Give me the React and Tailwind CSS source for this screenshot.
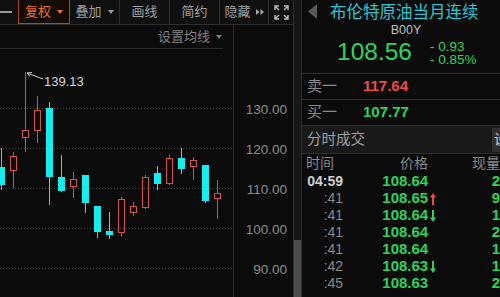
import React from "react";

// [type, bodyTop, bodyBottom, wickTop, wickBottom] in page y coordinates
const candles = [
  ["c", 167, 185, 148, 190],
  ["r", 156, 171, 152, 188],
  ["r", 130, 138, 72, 152],
  ["r", 110, 131, 96, 143],
  ["c", 108, 177, 102, 205],
  ["c", 177, 191, 155, 192],
  ["r", 179, 187, 172, 198],
  ["c", 175, 203, 175, 213],
  ["c", 206, 232, 206, 238],
  ["c", 231, 235, 212, 239],
  ["r", 199, 233, 197, 237],
  ["r", 206, 213, 202, 216],
  ["r", 177, 208, 175, 209],
  ["c", 173, 184, 166, 190],
  ["r", 158, 184, 155, 185],
  ["c", 158, 169, 148, 174],
  ["r", 160, 167, 157, 180],
  ["c", 165, 201, 165, 203],
  ["r", 193, 199, 180, 219],
];

const gridLines = [108, 148, 188, 228, 268];
const axisLabels = ["130.00", "120.00", "110.00", "100.00", "90.00"];

const trades = [
  { t: "04:59", p: "108.64", dir: null, q: "2", first: true },
  { t: ":41", p: "108.65", dir: "up", q: "9" },
  { t: ":41", p: "108.64", dir: "down", q: "1" },
  { t: ":41", p: "108.64", dir: null, q: "2" },
  { t: ":41", p: "108.64", dir: null, q: "1" },
  { t: ":42", p: "108.63", dir: "down", q: "1" },
  { t: ":45", p: "108.63", dir: null, q: "2" },
];

const Caret = ({ color = "#9a9a9a" }) => (
  <svg width="6" height="4" viewBox="0 0 6 4">
    <path d="M0 0H6L3 4Z" fill={color} />
  </svg>
);

const Arrow = ({ dir }) =>
  dir === "up" ? (
    <svg width="6" height="12" viewBox="0 0 6 12">
      <path d="M3 0L6 4.5H4V12H2V4.5H0Z" fill="#ef4b4b" />
    </svg>
  ) : (
    <svg width="6" height="12" viewBox="0 0 6 12">
      <path d="M3 12L6 7.5H4V0H2V7.5H0Z" fill="#2fd35b" />
    </svg>
  );

const CandleChart = () => (
  <svg width="233" height="248" viewBox="0 49 233 248" shapeRendering="crispEdges">
    {gridLines.map((y) => (
      <line key={y} x1="0" x2="233" y1={y + 0.5} y2={y + 0.5} stroke="#444" strokeDasharray="1 2" />
    ))}
    {candles.map(([type, bt, bb, wt, wb], i) => {
      const left = 12 * i - 2;
      if (type === "c") {
        return (
          <g key={i} fill="#14eeee">
            <rect x={left + 3} y={wt} width="1" height={wb - wt} />
            <rect x={left} y={bt} width="7" height={bb - bt} />
          </g>
        );
      }
      return (
        <g key={i}>
          <rect x={left + 3} y={wt} width="1" height={bt - wt} fill="#d2524c" />
          <rect x={left + 3} y={bb} width="1" height={wb - bb} fill="#d2524c" />
          <rect x={left + 0.5} y={bt + 0.5} width="6" height={bb - bt - 1} fill="none" stroke="#d2524c" />
        </g>
      );
    })}
    <g shapeRendering="geometricPrecision" stroke="#d0d0d0" strokeWidth="1" fill="none">
      <line x1="27" y1="73" x2="43" y2="79" />
      <polyline points="32,72.5 27,73 30,76.5" />
    </g>
    <text x="44" y="85.5" fill="#d8d8d8" fontSize="13" fontFamily="Liberation Sans, sans-serif">
      139.13
    </text>
  </svg>
);

export default function App() {
  return (
    <div className="flex h-[297px] w-[500px] overflow-hidden bg-[#0b0b0b] font-['Liberation_Sans','Noto_Sans_CJK_SC',sans-serif]">
      {/* left: chart */}
      <div className="flex w-[293px] flex-col">
        <div className="flex h-[25px] border-b border-[#2e2e2e] bg-[#101010] text-[13px] text-[#a0a0a0]">
          <div className="flex w-[18px] items-center">
            <div className="h-[2px] w-[12px] bg-[#9a9a9a]" />
          </div>
          <div className="flex w-[52px] items-center justify-center gap-[6px] border border-t-0 border-[#a84d1c] bg-[#150b05] text-[#e86d28]">
            复权
            <Caret color="#e86d28" />
          </div>
          <div className="flex w-[50px] items-center justify-center gap-[6px] border-r border-[#2e2e2e]">
            叠加
            <Caret />
          </div>
          <div className="flex w-[50px] items-center justify-center border-r border-[#2e2e2e]">画线</div>
          <div className="flex w-[50px] items-center justify-center border-r border-[#2e2e2e]">简约</div>
          <div className="flex w-[49px] items-center justify-center gap-[5px] border-r border-[#2e2e2e]">
            隐藏
            <svg width="8" height="6" viewBox="0 0 8 6">
              <path d="M0 0L3.5 3L0 6ZM4.5 0L8 3L4.5 6Z" fill="#a8a8a8" />
            </svg>
          </div>
          <div className="flex flex-1 items-center justify-center">
            <svg width="15" height="15" viewBox="0 0 15 15" fill="none" stroke="#b8b8b8" strokeWidth="1.5">
              <path d="M1 5V1H5M1 1L5 5" />
              <path d="M10 1H14V5M14 1L10 5" />
              <path d="M1 10V14H5M1 14L5 10" />
              <path d="M10 14H14V10M14 14L10 10" />
            </svg>
          </div>
        </div>

        <div className="flex flex-1">
          <div className="flex w-[233px] flex-col">
            <div className="mr-[10px] flex h-[24px] items-center justify-end gap-[6px] border-b border-[#2a2a2a] pr-[1px] text-[13px] text-[#808080]">
              设置均线
              <Caret color="#808080" />
            </div>
            <CandleChart />
          </div>
          <div className="flex w-[60px] flex-col border-l border-[#2a2a2a] pt-[65px] pr-[6px] text-right text-[13.5px] leading-[40px] text-[#8c8c8c]">
            {axisLabels.map((l) => (
              <div key={l} className="h-[40px]">
                {l}
              </div>
            ))}
          </div>
        </div>
      </div>

      {/* scrollbar */}
      <div className="flex w-[9px] flex-col border-x border-[#303030] bg-[#161616]">
        <div className="flex-1" />
        <div className="h-[57px] bg-[#4c4c4c]" />
      </div>

      {/* right: quote panel */}
      <div className="flex flex-1 flex-col overflow-hidden">
        <div className="flex h-[74px] flex-col border-b border-[#2e2e2e]">
          <div className="flex h-[23px] items-center pl-[6px]">
            <svg width="9" height="15" viewBox="0 0 9 15">
              <path d="M9 0V15L0 7.5Z" fill="#5a5a5a" />
            </svg>
            <span className="ml-[13px] text-[16.5px] leading-[22px] text-[#2ec5d3]">布伦特原油当月连续</span>
          </div>
          <div className="h-[14px] pl-[10px] text-center text-[12.5px] leading-[14px] text-[#c0c0c0]">B00Y</div>
          <div className="mt-[3px] flex pl-[35px]">
            <span className="text-[24.5px] leading-[24px] text-[#2fd35b]">108.56</span>
            <div className="ml-[18px] flex flex-col text-[13.5px] leading-[13px] text-[#2fd35b]">
              <span className="h-[13px]">- 0.93</span>
              <span className="h-[13px]">- 0.85%</span>
            </div>
          </div>
        </div>

        <div className="flex h-[26px] items-center border-b border-[#2e2e2e] pl-[5px] text-[15px]">
          <span className="w-[56px] text-[#8a8a8a]">卖一</span>
          <span className="font-bold text-[#ef4b4b]">117.64</span>
        </div>
        <div className="flex h-[26px] items-center border-b border-[#2e2e2e] pl-[5px] text-[15px]">
          <span className="w-[56px] text-[#8a8a8a]">买一</span>
          <span className="font-bold text-[#2fd35b]">107.77</span>
        </div>

        <div className="flex h-[28px] items-center border-b border-[#2e2e2e] bg-[#191919] pl-[5px] text-[14.5px] text-[#a0a0a0]">
          分时成交
          <div className="mr-[-22px] ml-auto flex h-[24px] w-[30px] shrink-0 items-center whitespace-nowrap bg-[#303030] pl-[2px] text-[14px] text-[#d0d0d0]">
            设置
          </div>
        </div>

        <div className="flex h-[19px] items-center text-[14px] text-[#8a8a8a]">
          <span className="w-[42px] pl-[4px]">时间</span>
          <span className="w-[87px] text-right">价格</span>
          <span className="w-[72px] shrink-0 text-right">现量</span>
        </div>
        {trades.map((r, i) => (
          <div key={i} className="flex h-[17px] shrink-0 items-center">
            <span
              className={`w-[42px] text-right text-[14px] ${r.first ? "font-bold text-[#d0d0d0]" : "text-[#8a8a8a]"}`}
            >
              {r.t}
            </span>
            <span className="w-[87px] text-right text-[15px] font-bold text-[#2fd35b]">{r.p}</span>
            <span className="flex w-[10px] justify-center">{r.dir && <Arrow dir={r.dir} />}</span>
            <span className="w-[62px] shrink-0 text-right text-[15px] font-bold text-[#2fd35b]">{r.q}</span>
          </div>
        ))}
      </div>
    </div>
  );
}
